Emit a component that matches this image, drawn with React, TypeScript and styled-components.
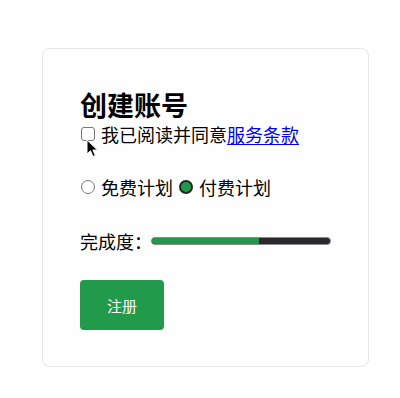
import styled, { createGlobalStyle } from "styled-components"

const Global = createGlobalStyle`
  body {
    margin: 0;
    background: #ffffff;
    font-family: "Noto Sans CJK SC", "Noto Sans", sans-serif;
    color: #000;
  }
`

const Page = styled.div`
  padding: 48px 0 0 42px;
`

const Card = styled.div`
  box-sizing: border-box;
  width: 327px;
  height: 319px;
  padding: 40px 37px 0 37px;
  border: 1px solid #e6e5e8;
  border-radius: 8px;
  background: #fefeff;
  display: flex;
  flex-direction: column;
`

const Title = styled.h1`
  margin: 0;
  font-size: 27px;
  line-height: 32px;
  font-weight: 700;
`

const Row = styled.label<{ $gap?: number }>`
  position: relative;
  display: flex;
  align-items: center;
  height: 26px;
  margin-top: ${(p) => p.$gap ?? 0}px;
  font-size: 18px;
  line-height: 26px;
  white-space: nowrap;
`

const Check = styled.input`
  appearance: none;
  box-sizing: border-box;
  width: 14px;
  height: 14px;
  margin: 0 6px 0 1px;
  border: 1px solid #767676;
  border-radius: 3px;
  background: #fff;
`

const Radio = styled.input`
  appearance: none;
  box-sizing: border-box;
  width: 14px;
  height: 14px;
  margin: 0 6px 0 1px;
  border: 1px solid #767676;
  border-radius: 50%;
  background: #fff;

  &:checked {
    border: 2px solid #1f2a22;
    background: #22994a;
  }
`

const RadioText = styled.span`
  margin-right: 5px;
`

const Link = styled.a`
  color: #0000ee;
  text-decoration: underline;
  text-underline-offset: 2px;
`

const Cursor = styled.svg`
  position: absolute;
  left: 6px;
  top: 18px;
`

const Track = styled.div`
  box-sizing: border-box;
  width: 182px;
  height: 8px;
  margin-left: -1px;
  border: 1px solid #8a8a8e;
  border-radius: 4px;
  background: #2a2a2d;
  overflow: hidden;
`

const Fill = styled.div`
  height: 100%;
  background: #22994a;
`

const Button = styled.button`
  box-sizing: border-box;
  width: 84px;
  height: 50px;
  margin-top: 26px;
  border: none;
  border-radius: 4px;
  background: #229a4b;
  color: #fff;
  font-family: inherit;
  font-size: 15px;
`

export default function App() {
  const progress = 60
  return (
    <>
      <Global />
      <Page>
        <Card>
          <Title>创建账号</Title>
          <Row>
            <Check type="checkbox" />
            我已阅读并同意<Link href="#">服务条款</Link>
            <Cursor width="13" height="20" viewBox="0 0 13 20">
              <path
                d="M1 1 L1 15 L4.5 11.8 L7 17.5 L9.3 16.5 L6.9 11 L11.5 11 Z"
                fill="#000"
                stroke="#fff"
                strokeWidth="1"
                strokeLinejoin="round"
              />
            </Cursor>
          </Row>
          <Row $gap={27}>
            <Radio type="radio" name="plan" />
            <RadioText>免费计划</RadioText>
            <Radio type="radio" name="plan" defaultChecked />
            <RadioText>付费计划</RadioText>
          </Row>
          <Row $gap={28}>
            完成度：
            <Track>
              <Fill style={{ width: `${progress}%` }} />
            </Track>
          </Row>
          <Button>注册</Button>
        </Card>
      </Page>
    </>
  )
}
